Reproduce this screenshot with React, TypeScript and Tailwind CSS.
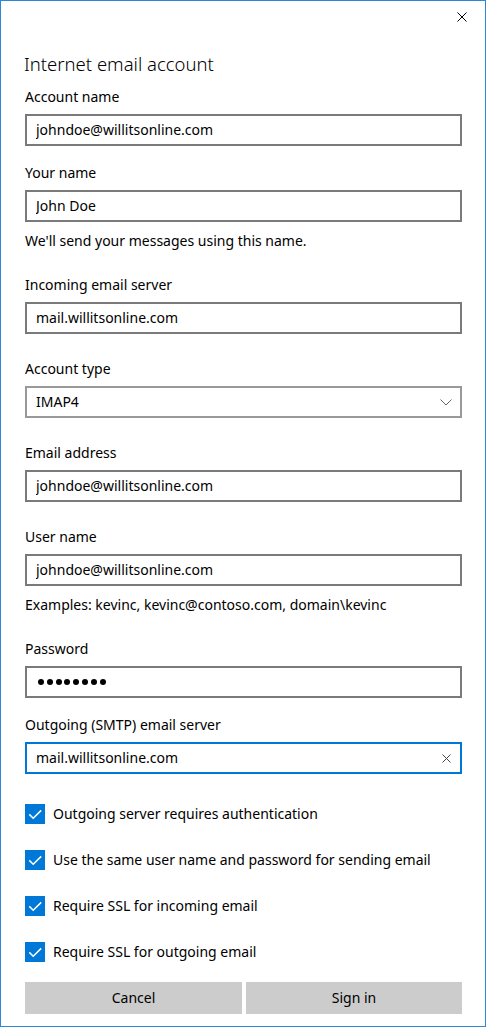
import React from 'react';

const Label: React.FC<{ text: string; className?: string }> = ({ text, className = '' }) => (
  <div className={`h-5 whitespace-nowrap ${className}`}>{text}</div>
);

const TextBox: React.FC<{ value: string; focused?: boolean }> = ({ value, focused }) => (
  <div
    className={`mt-[7px] h-8 border-2 flex items-center pl-[9px] pr-[9px] ${
      focused ? 'border-[#0078d7]' : 'border-[#7a7a7a]'
    }`}
  >
    <input
      readOnly
      defaultValue={value}
      className="flex-1 min-w-0 bg-transparent outline-none text-[14px] leading-5 text-black"
    />
    {focused && (
      <svg width="9" height="9" viewBox="0 0 9 9" className="shrink-0">
        <path d="M0.5 0.5 L8.5 8.5 M8.5 0.5 L0.5 8.5" stroke="#444" strokeWidth="1" fill="none" />
      </svg>
    )}
  </div>
);

const Check: React.FC<{ text: string; className?: string }> = ({ text, className = '' }) => (
  <div className={`flex items-center h-5 gap-2 ${className}`}>
    <div className="w-5 h-5 bg-[#0078d7] shrink-0">
      <svg width="20" height="20" viewBox="0 0 20 20">
        <path d="M4.3 10.4 L8.2 14.3 L16.2 6.4" stroke="#fff" strokeWidth="1.5" fill="none" />
      </svg>
    </div>
    <span className="whitespace-nowrap">{text}</span>
  </div>
);

export default function App() {
  return (
    <div className="w-[486px] h-[1027px] border border-[#2b88d8] bg-white flex flex-col font-['Noto_Sans',sans-serif] text-[14px] leading-5 text-black">
      <div className="h-8 flex justify-end shrink-0">
        <button className="w-[46px] h-8 flex items-center justify-center">
          <svg width="10" height="10" viewBox="0 0 10 10">
            <path d="M0.5 0.5 L9.5 9.5 M9.5 0.5 L0.5 9.5" stroke="#000" strokeWidth="1" fill="none" />
          </svg>
        </button>
      </div>

      <div className="pl-6 pr-[23px] flex flex-col">
        <h1 className="mt-[18px] -ml-px text-[18.5px] leading-[26px] font-[350] whitespace-nowrap">
          Internet email account
        </h1>

        <Label text="Account name" className="mt-[10px]" />
        <TextBox value="johndoe@willitsonline.com" />

        <Label text="Your name" className="mt-[17px]" />
        <TextBox value="John Doe" />
        <div className="mt-[9px] h-5">We'll send your messages using this name.</div>

        <Label text="Incoming email server" className="mt-6" />
        <TextBox value="mail.willitsonline.com" />

        <Label text="Account type" className="mt-[25px]" />
        <div className="mt-[7px] h-8 border-2 border-[#999999] flex items-center pl-[9px] pr-[8px]">
          <span className="flex-1">IMAP4</span>
          <svg width="12" height="7" viewBox="0 0 12 7" className="shrink-0">
            <path d="M0.5 0.5 L6 6 L11.5 0.5" stroke="#666" strokeWidth="1" fill="none" />
          </svg>
        </div>

        <Label text="Email address" className="mt-[25px]" />
        <TextBox value="johndoe@willitsonline.com" />

        <Label text="User name" className="mt-[25px]" />
        <TextBox value="johndoe@willitsonline.com" />
        <div className="mt-[9px] h-5 whitespace-nowrap">Examples: kevinc, kevinc@contoso.com, domain\kevinc</div>

        <Label text="Password" className="mt-6" />
        <div className="mt-[7px] h-8 border-2 border-[#7a7a7a] flex items-center pl-[11px] gap-[2.8px]">
          {Array.from({ length: 8 }).map((_, i) => (
            <span key={i} className="w-[6px] h-[6px] rounded-full bg-black" />
          ))}
        </div>

        <Label text="Outgoing (SMTP) email server" className="mt-[17px]" />
        <TextBox value="mail.willitsonline.com" focused />

        <Check text="Outgoing server requires authentication" className="mt-[30px]" />
        <Check text="Use the same user name and password for sending email" className="mt-[26px]" />
        <Check text="Require SSL for incoming email" className="mt-[26px]" />
        <Check text="Require SSL for outgoing email" className="mt-[26px]" />

        <div className="mt-5 flex gap-1">
          <button className="w-[217px] h-8 bg-[#cccccc] text-black">Cancel</button>
          <button className="flex-1 h-8 bg-[#cccccc] text-black">Sign in</button>
        </div>
      </div>
    </div>
  );
}
